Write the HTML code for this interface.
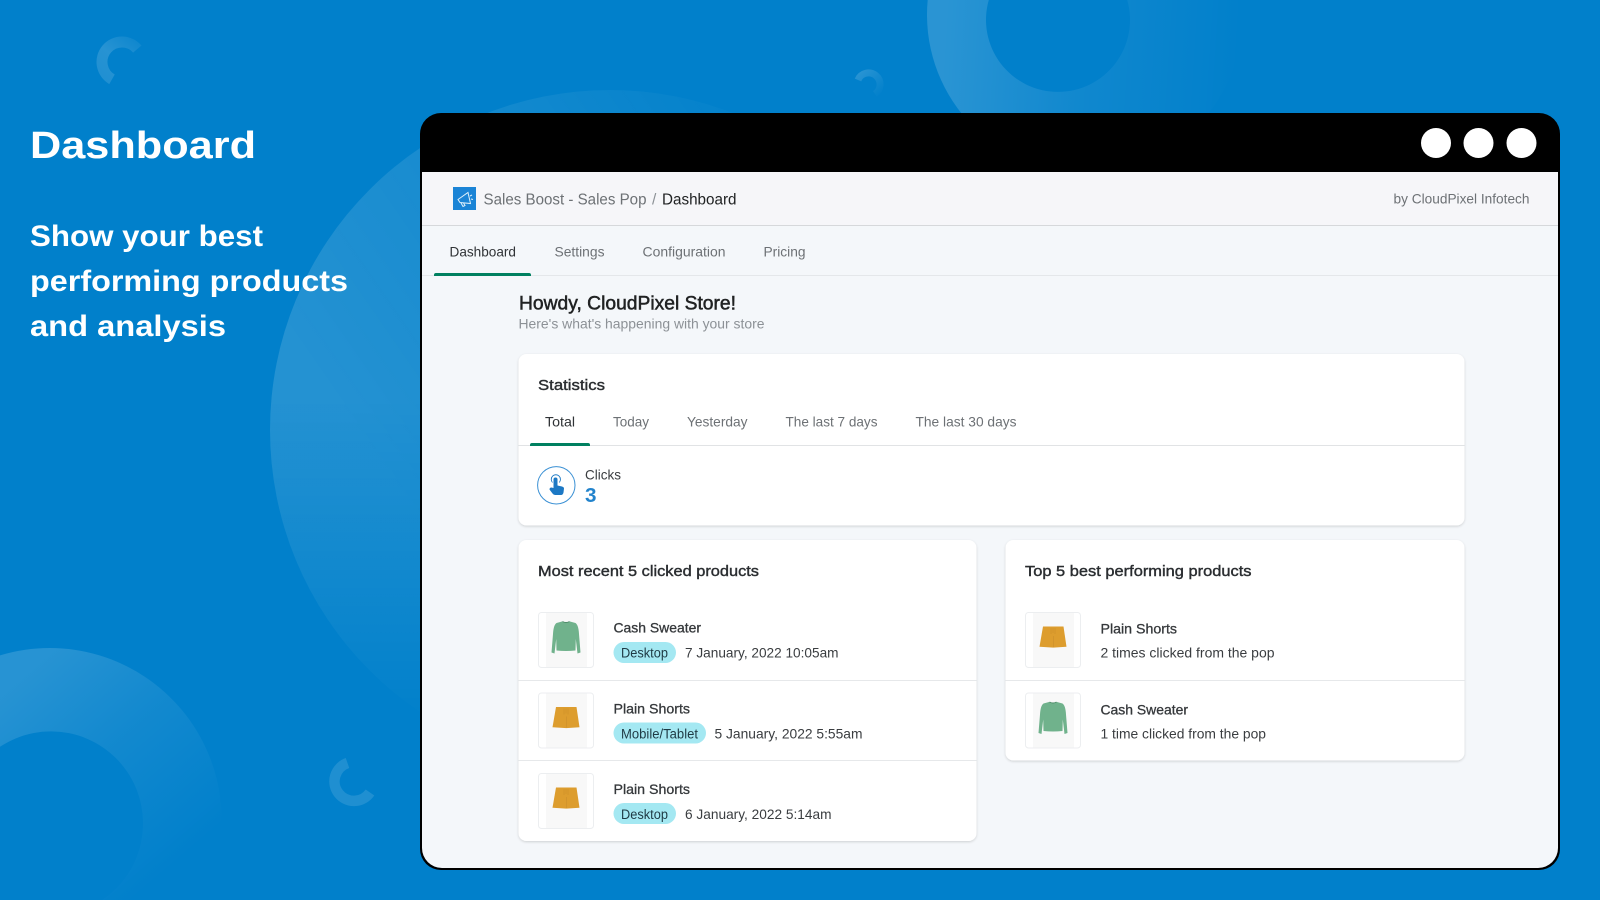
<!DOCTYPE html>
<html lang="en"><head><meta charset="utf-8"><title>Dashboard</title>
<style>
html,body{margin:0;padding:0;width:1600px;height:900px;overflow:hidden;background:#0180cb}
svg{display:block}
text{font-family:"Liberation Sans",sans-serif;white-space:pre}
.h{font-weight:700;fill:#fff}
.t{font-size:14px;fill:#6d7175}
.b{font-size:15px;fill:#2a2d30;stroke:#2a2d30;stroke-width:.4px}
.n{font-size:14px;fill:#35383b;stroke:#35383b;stroke-width:.3px}
.d{font-size:14px;fill:#3a3d40}
.g{font-size:13.5px;fill:#1f3a44}
</style></head><body>
<svg xmlns="http://www.w3.org/2000/svg" width="1600" height="900" viewBox="0 0 1600 900">
<defs>
<linearGradient id="a" x1="0" y1=".45" x2=".65" y2="0"><stop offset=".1" stop-color="#fff" stop-opacity=".14"/><stop offset=".55" stop-color="#fff" stop-opacity=".09"/><stop offset="1" stop-color="#fff" stop-opacity=".02"/></linearGradient>
<linearGradient id="am" gradientUnits="userSpaceOnUse" x1="0" y1="400" x2="0" y2="730"><stop offset="0" stop-color="#fff"/><stop offset="1" stop-color="#000"/></linearGradient>
<mask id="bm" maskUnits="userSpaceOnUse" x="260" y="80" width="700" height="700"><rect x="260" y="80" width="700" height="700" fill="url(#am)"/></mask>
<linearGradient id="r" gradientUnits="userSpaceOnUse" x1="0" y1="660" x2="175" y2="865"><stop offset=".1" stop-color="#fff" stop-opacity=".15"/><stop offset=".5" stop-color="#fff" stop-opacity=".07"/><stop offset="1" stop-color="#fff" stop-opacity="0"/></linearGradient>
<linearGradient id="u" gradientUnits="userSpaceOnUse" x1="930" y1="40" x2="1240" y2="60"><stop offset=".05" stop-color="#fff" stop-opacity=".16"/><stop offset=".5" stop-color="#fff" stop-opacity=".06"/><stop offset="1" stop-color="#fff" stop-opacity="0"/></linearGradient>
<linearGradient id="c1" gradientUnits="userSpaceOnUse" x1="140" y1="40" x2="105" y2="85"><stop offset="0" stop-color="#fff" stop-opacity=".05"/><stop offset=".5" stop-color="#fff" stop-opacity=".15"/><stop offset="1" stop-color="#fff" stop-opacity=".12"/></linearGradient>
<linearGradient id="c2" gradientUnits="userSpaceOnUse" x1="856" y1="74" x2="878" y2="98"><stop offset="0" stop-color="#fff" stop-opacity=".16"/><stop offset="1" stop-color="#fff" stop-opacity="0"/></linearGradient>
<filter id="s" x="-3%" y="-5%" width="106%" height="112%"><feDropShadow dx="0" dy="1" stdDeviation="1.2" flood-color="#000" flood-opacity=".16"/></filter>
<filter id="bl" x="-10%" y="-10%" width="120%" height="120%"><feGaussianBlur stdDeviation=".35"/></filter>
<g id="sw"><rect x=".5" y=".5" width="55" height="55" rx="3" fill="#fff" stroke="#eceef0"/><rect x="8" y="1" width="41" height="54" fill="#f8f8f8"/><g filter="url(#bl)"><path d="M24 9.5Q28 11 32 9.5L37.5 11Q40.5 13 41 22L42.5 40.5 39.5 41.5 37.8 27 37.5 38.5Q28 39.5 18.5 38.5L18.2 27 16.5 41.5 13.5 40.5 15 22Q15.5 13 18.5 11Z" fill="#70b28c"/><path d="M24.5 9.5Q28 11.5 31.5 9.5" stroke="#4d8a68" stroke-width="1" fill="none"/></g></g>
<g id="sh"><rect x=".5" y=".5" width="55" height="55" rx="3" fill="#fff" stroke="#eceef0"/><rect x="8" y="1" width="41" height="54" fill="#f8f8f8"/><g filter="url(#bl)"><path d="M18 14.5H38.5L41.5 34.8 28.3 35.6 14.5 34.8Z" fill="#dd9d2f"/><path d="M28.3 24V35M26 16V22M30 16V22M28 16V21" stroke="#c78c2a" stroke-width=".5" fill="none"/></g></g>
</defs>

<rect width="1600" height="900" fill="#0180cb"/>
<circle cx="610" cy="430" r="340" fill="url(#a)" mask="url(#bm)"/>
<path d="M0 655.4A172 172 0 0 1 202 900L102 900A92 92 0 0 0 0 746.8Z" fill="url(#r)"/>
<path d="M927.7 0A158 158 0 1 0 1242.3 0L1127.2 0A72 72 0 1 1 988.8 0Z" fill="url(#u)"/>
<path d="M137.3 49.1A20 20 0 1 0 112 79.3" fill="none" stroke="url(#c1)" stroke-width="11"/>
<path d="M858 80A11.5 11.5 0 1 1 875 94" fill="none" stroke="url(#c2)" stroke-width="7"/>
<path d="M347.5 763A19.5 19.5 0 1 0 370 792.5" fill="none" stroke="#fff" stroke-opacity=".12" stroke-width="10.5"/>

<text class="h" x="30" y="158" font-size="38" lengthAdjust="spacingAndGlyphs" textLength="226">Dashboard</text>
<text class="h" x="30" y="246" font-size="30" lengthAdjust="spacingAndGlyphs" textLength="233">Show your best</text>
<text class="h" x="30" y="291" font-size="30" lengthAdjust="spacingAndGlyphs" textLength="318">performing products</text>
<text class="h" x="30" y="336" font-size="30" lengthAdjust="spacingAndGlyphs" textLength="196">and analysis</text>

<rect x="420" y="113" width="1140" height="757" rx="21" fill="#000"/>
<path d="M422 172H1558V848a20 20 0 0 1-20 20H442a20 20 0 0 1-20-20Z" fill="#f4f7fa"/>
<rect x="422" y="172" width="1136" height="53" fill="#f6f6f9"/>
<rect x="422" y="225" width="1136" height="1" fill="#d6d8db"/>
<rect x="422" y="275" width="1136" height="1" fill="#e4e7ea"/>
<circle cx="1436" cy="143" r="15" fill="#fff"/><circle cx="1478.5" cy="143" r="15" fill="#fff"/><circle cx="1521.5" cy="143" r="15" fill="#fff"/>

<rect x="453" y="187" width="23" height="23" fill="#1b84d6"/>
<path d="M458 199.5L468 192.5L470.5 203.5L460 202.5ZM461 203L463 206.5L465 205.5L463.5 203M470 196L472 195M471 199L473 199.5" fill="none" stroke="#dff0fb" stroke-width="1"/>
<text x="483.5" y="204.5" font-size="15.5" fill="#6d7175" lengthAdjust="spacingAndGlyphs" textLength="163">Sales Boost - Sales Pop</text>
<text x="652" y="204.5" font-size="15.5" fill="#8c9196">/</text>
<text x="662" y="204.5" font-size="15.5" fill="#202223" lengthAdjust="spacingAndGlyphs" textLength="74.5">Dashboard</text>
<text x="1393.5" y="203.5" font-size="14" fill="#6d7175" lengthAdjust="spacingAndGlyphs" textLength="136">by CloudPixel Infotech</text>

<text class="t" x="449.5" y="256.5" style="fill:#303336" lengthAdjust="spacingAndGlyphs" textLength="66.5">Dashboard</text>
<text class="t" x="554.5" y="256.5" lengthAdjust="spacingAndGlyphs" textLength="50">Settings</text>
<text class="t" x="642.5" y="256.5" lengthAdjust="spacingAndGlyphs" textLength="83">Configuration</text>
<text class="t" x="763.5" y="256.5" lengthAdjust="spacingAndGlyphs" textLength="42">Pricing</text>
<path d="M434 276v-1a2 2 0 0 1 2-2H529a2 2 0 0 1 2 2v1Z" fill="#008060"/>

<text x="519" y="309.5" font-size="19.5" fill="#202223" stroke="#202223" stroke-width=".5" lengthAdjust="spacingAndGlyphs" textLength="217">Howdy, CloudPixel Store!</text>
<text x="518.5" y="328.5" font-size="14" fill="#8c9196" lengthAdjust="spacingAndGlyphs" textLength="246">Here's what's happening with your store</text>

<rect x="518.5" y="354" width="946" height="171.5" rx="8" fill="#fff" filter="url(#s)"/>
<text class="b" x="538" y="390" lengthAdjust="spacingAndGlyphs" textLength="67">Statistics</text>
<text class="t" x="545" y="426.5" style="fill:#303336" lengthAdjust="spacingAndGlyphs" textLength="30">Total</text>
<text class="t" x="613" y="426.5" lengthAdjust="spacingAndGlyphs" textLength="36">Today</text>
<text class="t" x="687" y="426.5" lengthAdjust="spacingAndGlyphs" textLength="60.5">Yesterday</text>
<text class="t" x="785.5" y="426.5" lengthAdjust="spacingAndGlyphs" textLength="92">The last 7 days</text>
<text class="t" x="915.5" y="426.5" lengthAdjust="spacingAndGlyphs" textLength="101">The last 30 days</text>
<rect x="518.5" y="445" width="946" height="1" fill="#e1e3e5"/>
<path d="M530 446v-1a2 2 0 0 1 2-2H588a2 2 0 0 1 2 2v1Z" fill="#008060"/>

<circle cx="556.3" cy="485.3" r="18.7" fill="#fff" stroke="#3a90d4" stroke-width="1"/>
<path d="M553.5 488V479.5a2 2 0 0 1 4 0V485.5L562 486.5Q564 487 564 488.5L563.5 492.5Q563 495 561 495H555Q553.5 495 552.5 493.5L549.5 489.5Q549.5 487.5 551.5 487.5Z" fill="#1c78c4"/>
<path d="M552.5 482.5A4.6 4.6 0 1 1 559.2 482.5" fill="none" stroke="#1c78c4" stroke-width=".9"/>
<text x="585" y="479.5" font-size="14" fill="#3a3d40" lengthAdjust="spacingAndGlyphs" textLength="36">Clicks</text>
<text x="585" y="502" font-size="20" font-weight="700" fill="#2283cc" lengthAdjust="spacingAndGlyphs" textLength="11.5">3</text>

<rect x="518.5" y="540" width="458" height="301" rx="8" fill="#fff" filter="url(#s)"/>
<text class="b" x="538" y="576" lengthAdjust="spacingAndGlyphs" textLength="221">Most recent 5 clicked products</text>
<use href="#sw" x="538" y="612"/>
<text class="n" x="613.5" y="632.5" lengthAdjust="spacingAndGlyphs" textLength="87.5">Cash Sweater</text>
<rect x="613.5" y="642" width="62.5" height="21" rx="10.5" fill="#a4e8f2"/>
<text class="g" x="621" y="657.5" lengthAdjust="spacingAndGlyphs" textLength="47">Desktop</text>
<text class="d" x="685" y="657.5" lengthAdjust="spacingAndGlyphs" textLength="153.5">7 January, 2022 10:05am</text>
<rect x="518.5" y="680" width="458" height="1" fill="#e6e8ea"/>
<use href="#sh" x="538" y="692.5"/>
<text class="n" x="613.5" y="713.5" lengthAdjust="spacingAndGlyphs" textLength="76.5">Plain Shorts</text>
<rect x="613.5" y="722.5" width="92.5" height="21" rx="10.5" fill="#a4e8f2"/>
<text class="g" x="621" y="738.5" lengthAdjust="spacingAndGlyphs" textLength="77">Mobile/Tablet</text>
<text class="d" x="714.5" y="738.5" lengthAdjust="spacingAndGlyphs" textLength="148">5 January, 2022 5:55am</text>
<rect x="518.5" y="760" width="458" height="1" fill="#e6e8ea"/>
<use href="#sh" x="538" y="773"/>
<text class="n" x="613.5" y="794" lengthAdjust="spacingAndGlyphs" textLength="76.5">Plain Shorts</text>
<rect x="613.5" y="803" width="62.5" height="21" rx="10.5" fill="#a4e8f2"/>
<text class="g" x="621" y="819" lengthAdjust="spacingAndGlyphs" textLength="47">Desktop</text>
<text class="d" x="685" y="819" lengthAdjust="spacingAndGlyphs" textLength="146.5">6 January, 2022 5:14am</text>

<rect x="1005.5" y="540" width="459" height="220.5" rx="8" fill="#fff" filter="url(#s)"/>
<text class="b" x="1025" y="576" lengthAdjust="spacingAndGlyphs" textLength="226.5">Top 5 best performing products</text>
<use href="#sh" x="1025" y="612"/>
<text class="n" x="1100.5" y="633.5" lengthAdjust="spacingAndGlyphs" textLength="76.5">Plain Shorts</text>
<text class="d" x="1100.5" y="657.5" lengthAdjust="spacingAndGlyphs" textLength="174">2 times clicked from the pop</text>
<rect x="1005.5" y="680" width="459" height="1" fill="#e6e8ea"/>
<use href="#sw" x="1025" y="692.5"/>
<text class="n" x="1100.5" y="714.5" lengthAdjust="spacingAndGlyphs" textLength="87.5">Cash Sweater</text>
<text class="d" x="1100.5" y="738.5" lengthAdjust="spacingAndGlyphs" textLength="165.5">1 time clicked from the pop</text>
</svg>
</body></html>
